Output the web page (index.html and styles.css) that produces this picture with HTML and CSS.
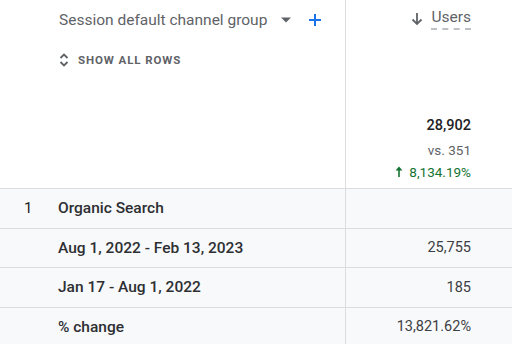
FILE: index.html
```html
<!DOCTYPE html>
<html>
<head>
<meta charset="utf-8">
<link rel="stylesheet" href="styles.css">
</head>
<body>
<div class="table">
  <div class="head-left">
    <div class="dim-title">
      <span class="dim-name">Session default channel group</span>
      <svg class="caret" width="10" height="6" viewBox="0 0 10 5"><path d="M0 0h10L5 5z" fill="#5f6368"/></svg>
      <svg class="plus" width="14" height="14" viewBox="0 0 14 14"><path d="M7 1v12M1 7h12" stroke="#1a73e8" stroke-width="2"/></svg>
    </div>
    <div class="show-all">
      <svg class="updown" width="10" height="16" viewBox="0 0 10 16"><path d="M1.5 6L5 2.5 8.5 6M1.5 10L5 13.5 8.5 10" fill="none" stroke="#5f6368" stroke-width="1.8"/></svg>
      <span>SHOW ALL ROWS</span>
    </div>
  </div>
  <div class="head-right">
    <div class="metric-title">
      <svg class="sort" width="12" height="14" viewBox="0 0 12 14"><path d="M6 1v11M1.5 7.5L6 12l4.5-4.5" fill="none" stroke="#5f6368" stroke-width="1.8"/></svg>
      <span class="metric-name">Users</span>
    </div>
    <div class="totals">
      <div class="total">28,902</div>
      <div class="vs">vs. 351</div>
      <div class="change">
        <svg class="up" width="8" height="11" viewBox="0 0 8 11"><path d="M4 11V3" stroke="#137333" stroke-width="1.6"/><path d="M0.5 4.5L4 0.5 7.5 4.5z" fill="#137333"/></svg>
        <span>8,134.19%</span>
      </div>
    </div>
  </div>

  <div class="cell first"><span class="idx">1</span><span class="label">Organic Search</span></div>
  <div class="cell num"></div>

  <div class="cell first"><span class="idx"></span><span class="label">Aug 1, 2022 - Feb 13, 2023</span></div>
  <div class="cell num">25,755</div>

  <div class="cell first"><span class="idx"></span><span class="label">Jan 17 - Aug 1, 2022</span></div>
  <div class="cell num">185</div>

  <div class="cell first"><span class="idx"></span><span class="label">% change</span></div>
  <div class="cell num">13,821.62%</div>
</div>
</body>
</html>
```
FILE: styles.css
```css
* { box-sizing: border-box; }
html, body { margin: 0; padding: 0; background: #fff; }
body { font-family: Roboto, "Noto Sans", sans-serif; color: #202124; width: 512px; height: 344px; overflow: hidden; }

.table {
  display: grid;
  grid-template-columns: 346px 166px;
  grid-template-rows: 188px 39.5px 39.5px 39.5px 39.5px;
}

.head-left {
  padding: 9px 0 0 59px;
  border-right: 1px solid #dadce0;
}
.head-right {
  padding: 8px 41px 0 0;
  display: flex;
  flex-direction: column;
  align-items: flex-end;
}

.dim-title { display: flex; align-items: center; height: 22px; }
.dim-name { font-size: 15.5px; color: #5f6368; }
.caret { margin-left: 14px; }
.plus { margin-left: 17px; }

.show-all {
  display: flex; align-items: center; margin-top: 21px;
  font-size: 11.5px; font-weight: 700; letter-spacing: 0.9px; color: #5f6368;
}
.updown { margin-right: 9px; }

.metric-title { display: flex; align-items: center; height: 22px; }
.sort { margin-right: 8px; }
.metric-name {
  font-size: 15.5px; color: #5f6368;
  padding-bottom: 2px;
  border-bottom: 2px dashed #bdc1c6;
  line-height: 18px;
}

.totals { margin-top: 86px; display: flex; flex-direction: column; align-items: flex-end; }
.total { font-size: 14.5px; font-weight: 500; color: #202124; line-height: 20px; }
.vs { font-size: 13.5px; color: #5f6368; margin-top: 5px; line-height: 18px; }
.change { font-size: 13.5px; color: #137333; margin-top: 4px; line-height: 18px; display: flex; align-items: center; }
.up { margin-right: 6px; margin-top: -2px; }

.cell {
  background: #f8f9fa;
  border-top: 1px solid #dadce0;
  display: flex; align-items: center;
  font-size: 14.5px;
}
.cell.first { border-right: 1px solid #dadce0; }
.idx { width: 58px; padding-left: 24px; color: #202124; font-size: 15px; }
.label { font-weight: 500; color: #2d2f33; font-size: 15.5px; }
.num { justify-content: flex-end; padding-right: 41px; color: #3c4043; }
```
